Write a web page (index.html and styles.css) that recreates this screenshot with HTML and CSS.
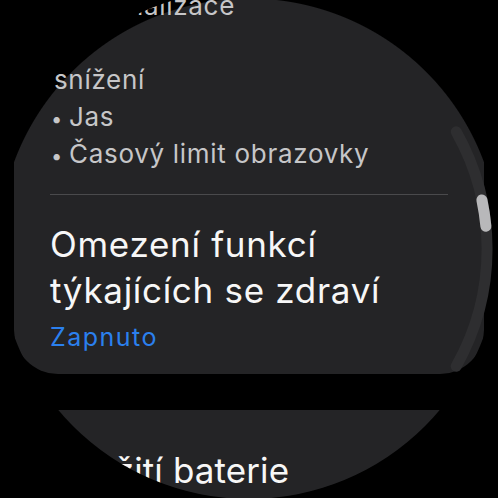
FILE: index.html
```html
<!DOCTYPE html>
<html lang="cs">
<head>
<meta charset="utf-8">
<title>Omezení funkcí</title>
<link rel="stylesheet" href="styles.css">
</head>
<body>
<div class="screen">
  <div class="list">
    <section class="card card-top">
      <div class="desc">
        <div class="line line-end line-end-a"><span>Pro optimalizace</span></div>
        <div class="line">&nbsp;</div>
        <div class="line line-end line-end-b"><span>Automatické snížení</span></div>
        <div class="line"><span class="bullet">•</span>Jas</div>
        <div class="line"><span class="bullet">•</span>Časový limit obrazovky</div>
      </div>
      <div class="divider"></div>
      <div class="title">Omezení funkcí<br>týkajících se zdraví</div>
      <div class="status">Zapnuto</div>
    </section>
    <section class="card card-bottom">
      <div class="title title-sm">Využití baterie</div>
    </section>
  </div>
  <svg class="scrollbar" width="498" height="498" viewBox="0 0 498 498">
    <path class="track" d="M456.2 131.8 A238 238 0 0 1 456.2 366.2"/>
    <path class="thumb" d="M481.9 200 A238 238 0 0 1 485.9 226.2"/>
  </svg>
</div>
</body>
</html>
```
FILE: styles.css
```css
html, body {
  margin: 0;
  padding: 0;
  background: #000;
}
body {
  width: 498px;
  height: 498px;
  overflow: hidden;
  font-family: "Inter", "Roboto", "DejaVu Sans", sans-serif;
}
.screen {
  position: relative;
  width: 498px;
  height: 498px;
  overflow: hidden;
}
.list {
  display: flex;
  flex-direction: column;
  gap: 36px;
  margin-top: -43px;
  padding: 0 14px;
  clip-path: circle(260px at 249px 292px);
}
.card {
  border-radius: 44px;
  padding: 30px 36px 21px;
  background: radial-gradient(circle 251px at 249px 249px, #242426 250px, rgba(36,36,38,0) 251px) fixed;
}
.desc {
  color: #c6c6c8;
  font-size: 26px;
  line-height: 37px;
  letter-spacing: 0.7px;
  white-space: nowrap;
}
.line {
  height: 37px;
}
.line-end {
  display: flex;
  justify-content: flex-end;
}
.line-end-a {
  width: 185px;
}
.line-end-b {
  width: 95px;
}
.bullet {
  display: inline-block;
  width: 18px;
  font-size: 20px;
  line-height: 1;
  padding-left: 1px;
}
.divider {
  height: 1px;
  background: #4a4a4c;
  margin: 22px 0 26px;
}
.title {
  color: #f7f7f7;
  font-size: 35px;
  line-height: 46px;
  letter-spacing: 0.7px;
  white-space: nowrap;
}
.title-sm {
  letter-spacing: 0.1px;
}
.status {
  color: #2b80ee;
  font-size: 25px;
  line-height: 32px;
  letter-spacing: 1.5px;
  margin-top: 8px;
}
.card-bottom {
  padding-top: 37px;
  min-height: 120px;
  clip-path: circle(249px at 235px -160px);
}
.scrollbar {
  position: absolute;
  left: 0;
  top: 0;
}
.track {
  fill: none;
  stroke: #2e2e30;
  stroke-width: 11;
  stroke-linecap: round;
}
.thumb {
  fill: none;
  stroke: #b8b8ba;
  stroke-width: 11;
  stroke-linecap: round;
}
```
